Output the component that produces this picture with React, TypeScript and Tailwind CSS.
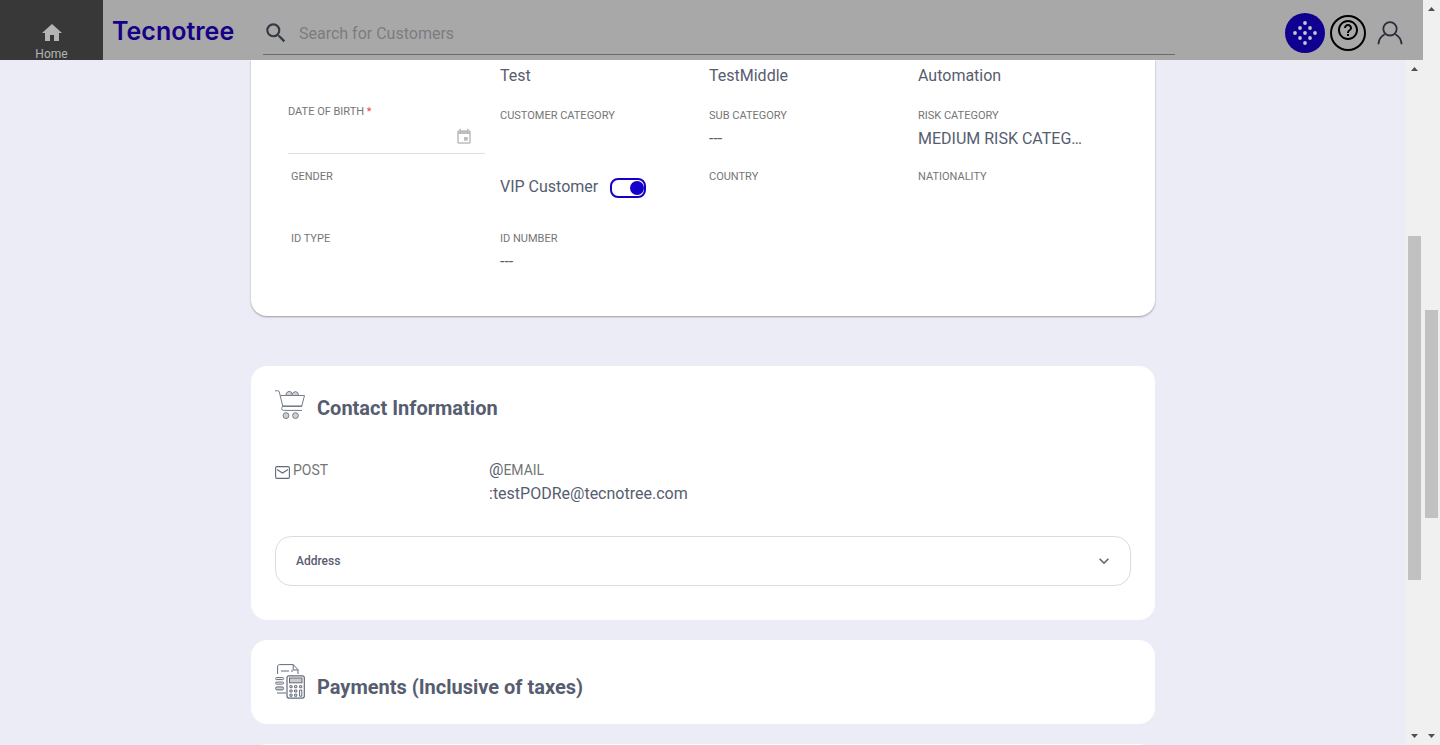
import type { ReactNode } from "react";
import { MdEvent, MdExpandMore, MdHelpOutline, MdHome, MdSearch } from "react-icons/md";

function DotsIcon() {
  const dots = [
    [20, 10], [15, 15], [25, 15], [10, 20], [20, 20], [30, 20], [15, 25], [25, 25], [20, 30],
  ];
  return (
    <svg viewBox="0 0 40 40" className="size-10" fill="#c4c4d0" aria-hidden="true">
      {dots.map(([x, y]) => (
        <circle key={`${x}-${y}`} cx={x} cy={y} r="1.9" />
      ))}
    </svg>
  );
}

function UserIcon() {
  return (
    <svg viewBox="0 0 26 24" className="h-6 w-[26px]" fill="none" stroke="#2a2e3a" strokeWidth="1.8" aria-hidden="true">
      <circle cx="13" cy="7.8" r="6.7" />
      <path d="M1.4 23.2c.3-4.300 2.500-7.900 6.300-10M24.600 23.200c-.3-4.300-2.500-7.900-6.300-10" />
    </svg>
  );
}

function CartIcon() {
  return (
    <svg viewBox="0 0 30 30" className="size-[30px]" fill="none" stroke="#747b8b" strokeWidth="1" aria-hidden="true">
      <path d="M11 5.500l.3-2.500 2.500-1.700 2.600.9.800 1.800 1-1.400 2.400-1.100 2.200 1.300.7 2.700z" fill="#cfcfcf" />
      <path d="M16.500 5.500l1-2" />
      <path d="M0 .8h2.800c.8 0 1.300.4 1.500 1.200L7.800 16.300M5.500 5.500h24L26.700 16.300M7.800 16.300c-1.400 1-1.500 4.100.5 4.100H27" />
      <path d="M7.500 16.200h19.400" strokeWidth="1.400" stroke="#626a7c" />
      <circle cx="11" cy="25.600" r="2.900" fill="#cfcfcf" />
      <circle cx="20.500" cy="25.600" r="2.900" fill="#cfcfcf" />
    </svg>
  );
}

function CalculatorIcon() {
  return (
    <svg viewBox="0 0 30 35" className="h-[35px] w-[30px]" fill="none" stroke="#626a7c" strokeWidth="1" aria-hidden="true">
      <path d="M2.600 10V2.500c0-1.200.7-1.900 1.900-1.900h13.700l4.800 5V10M18.200.6V6H23M6 7h8M16 7h2M2 29h9" />
      <rect x=".6" y="13.600" width="8" height="2" rx="1" />
      <rect x=".6" y="18.100" width="8" height="2" rx="1" />
      <rect x=".6" y="22.900" width="8" height="3" rx="1.400" fill="#cfcfcf" />
      <rect x="12" y="11.800" width="17.300" height="22.300" rx="2" fill="#fff" strokeWidth="1.200" />
      <rect x="14.500" y="14" width="12.500" height="4.800" fill="#cfcaca" />
      <path d="M14.900 21.700h2.200v2h-2.200zM19.600 21.700h2.200v2h-2.200zM24.600 21.700h2.200v2h-2.200zM14.900 26h2.200v2h-2.200zM19.600 26h2.200v2h-2.200zM14.900 30.200h2.200v2h-2.200zM19.600 30.200h2.200v2h-2.200zM24.600 26h2.200v6.200h-2.200z" />
    </svg>
  );
}

function MailIcon() {
  return (
    <svg viewBox="0 0 15 13" className="h-[13px] w-[15px]" fill="none" stroke="#626a7c" strokeWidth="1.100" aria-hidden="true">
      <rect x=".6" y=".6" width="13.800" height="11.800" rx="1.300" />
      <path d="M2 3.500 7.500 7 13 3.500" />
    </svg>
  );
}

function Scrollbar({ before, thumb, after }: { before: number; thumb: number; after: number }) {
  return (
    <div className="flex w-[17px] shrink-0 flex-col items-center bg-[#f0f0f0]" aria-hidden="true">
      <svg viewBox="0 0 17 17" className="size-[17px] shrink-0" fill="#505050">
        <path d="M5 11h7L8.500 7z" />
      </svg>
      <div className="basis-0" style={{ flexGrow: before }} />
      <div className="w-[13px] basis-0 bg-[#c1c1c1]" style={{ flexGrow: thumb }} />
      <div className="basis-0" style={{ flexGrow: after }} />
      <svg viewBox="0 0 17 17" className="size-[17px] shrink-0" fill="#505050">
        <path d="M5 6h7L8.500 10z" />
      </svg>
    </div>
  );
}

function Field({ label, value }: { label: string; value?: string }) {
  return (
    <div className="min-w-0 pl-[3px]">
      <div className="text-[11px] leading-4 text-[#757575]">{label}</div>
      {value && <div className="mt-[3px] text-base leading-6">{value}</div>}
    </div>
  );
}

function SectionTitle({ icon, children }: { icon: ReactNode; children: ReactNode }) {
  return (
    <div className="flex items-end gap-3">
      {icon}
      <h2 className="text-xl leading-6 font-bold">{children}</h2>
    </div>
  );
}

function Header() {
  return (
    <header className="flex h-[60px] shrink-0 overflow-hidden bg-[#a8a8a8]">
      <a
        href="#home"
        className="flex w-[103px] shrink-0 flex-col items-center bg-[#383838] pt-[21px] text-[#b4b4b4]"
      >
        <MdHome className="size-6 shrink-0" />
        <span className="text-xs leading-[18px]">Home</span>
      </a>
      <a
        href="#tecnotree"
        className="w-40 shrink-0 pt-[13px] pl-[9px] font-['Inter'] text-[25px] leading-9 font-semibold text-[#160085]"
      >
        Tecnotree
      </a>
      <form className="mb-[5px] flex min-w-0 flex-1 items-center border-b border-[#6b6b6b] pt-3" role="search">
        <MdSearch className="size-[26px] shrink-0 text-[#333a44]" />
        <input
          type="search"
          aria-label="Search for Customers"
          placeholder="Search for Customers"
          className="ml-2.5 w-full bg-transparent pt-px text-base outline-none placeholder:text-[#7c7c80]"
        />
      </form>
      <div className="ml-[110px] flex shrink-0 items-center gap-[5px] pt-[5px] pr-5">
        <button type="button" aria-label="Apps" className="size-10 rounded-full bg-[#100090]">
          <DotsIcon />
        </button>
        <button
          type="button"
          aria-label="Help"
          className="flex size-9 justify-center rounded-full border-2 border-black pt-px text-black"
        >
          <MdHelpOutline className="size-6" />
        </button>
        <button type="button" aria-label="Account" className="ml-[6px] pt-px">
          <UserIcon />
        </button>
      </div>
    </header>
  );
}

export default function App() {
  return (
    <div className="flex h-screen overflow-hidden font-['Roboto',sans-serif] text-[#575d70]">
      <div className="flex min-w-0 flex-1 flex-col">
        <Header />
        <div className="flex min-h-0 flex-1">
          <main className="min-w-0 flex-1 overflow-hidden bg-[#ececf6]">
            <div className="mx-auto w-full max-w-[904px]">
              <section className="rounded-b-2xl bg-white pt-1 pr-[31px] pb-[35px] pl-[37px] shadow-[0_1px_2px_rgba(0,0,0,0.35)]">
                <div className="grid grid-cols-4 text-base leading-6">
                  <div className="col-start-2 h-10 pl-[3px]">Test</div>
                  <div className="pl-[3px]">TestMiddle</div>
                  <div className="pl-[3px]">Automation</div>
                </div>
                <div className="grid grid-cols-4">
                  <div className="mr-3 h-[65px]">
                    <label htmlFor="dob" className="block text-[11px] leading-4 text-[#757575]">
                      DATE OF BIRTH <span className="text-[#f44336]">*</span>
                    </label>
                    <div className="flex h-[34px] items-center border-b border-[#e0e0e0] pr-3">
                      <input id="dob" type="text" className="w-full min-w-0 bg-transparent outline-none" />
                      <button type="button" aria-label="Open calendar">
                        <MdEvent className="size-[18px] text-[#bdbdbd]" />
                      </button>
                    </div>
                  </div>
                  <div className="pt-1"><Field label="CUSTOMER CATEGORY" /></div>
                  <div className="pt-1"><Field label="SUB CATEGORY" value="---" /></div>
                  <div className="pt-1"><Field label="RISK CATEGORY" value="MEDIUM RISK CATEG…" /></div>
                </div>
                <div className="grid grid-cols-4">
                  <Field label="GENDER" />
                  <div className="flex h-[62px] items-start gap-3 pt-[6px] pl-[3px]">
                    <label htmlFor="vip" className="text-base leading-6">VIP Customer</label>
                    <span className="mt-[3px] flex h-5 w-9 items-center justify-end rounded-lg border-2 border-[#1400c8]">
                      <input
                        id="vip"
                        type="checkbox"
                        role="switch"
                        defaultChecked
                        className="size-[14px] appearance-none rounded-full bg-[#1400c8]"
                      />
                    </span>
                  </div>
                  <Field label="COUNTRY" />
                  <Field label="NATIONALITY" />
                </div>
                <div className="grid h-[50px] grid-cols-4">
                  <Field label="ID TYPE" />
                  <Field label="ID NUMBER" value="---" />
                </div>
              </section>

              <section className="mt-[50px] rounded-2xl bg-white px-6 pt-6 pb-[34px]">
                <SectionTitle icon={<CartIcon />}>Contact Information</SectionTitle>
                <div className="mt-[38px] grid grid-cols-4">
                  <div className="flex items-start gap-[3px] text-sm leading-6 text-[#757575]">
                    <span className="pt-[8px]"><MailIcon /></span>
                    POST
                  </div>
                  <div>
                    <div className="flex text-sm leading-6 text-[#757575]">
                      <span className="text-base leading-6 text-[#575d70]">@</span>EMAIL
                    </div>
                    <div className="text-base leading-6">:testPODRe@tecnotree.com</div>
                  </div>
                </div>
                <button
                  type="button"
                  aria-expanded="false"
                  className="mt-[30px] flex h-[50px] w-full items-center justify-between rounded-2xl border border-[#dcdcdc] px-5 text-xs font-medium"
                >
                  Address
                  <MdExpandMore className="-mr-1 size-5 text-[#626a7c]" />
                </button>
              </section>

              <section className="mt-5 rounded-2xl bg-white px-6 pt-6 pb-[25px]">
                <SectionTitle icon={<CalculatorIcon />}>Payments (Inclusive of taxes)</SectionTitle>
              </section>
              <section className="mt-5 h-20 rounded-2xl bg-white" />
            </div>
          </main>
          <Scrollbar before={159} thumb={344} after={148} />
        </div>
      </div>
      <Scrollbar before={293} thumb={208} after={210} />
    </div>
  );
}
